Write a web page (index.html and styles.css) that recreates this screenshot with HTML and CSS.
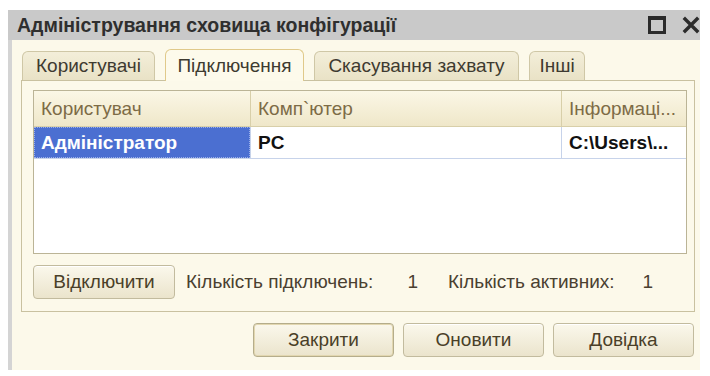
FILE: index.html
```html
<!DOCTYPE html>
<html lang="uk">
<head>
  <meta charset="UTF-8">
  <title>Адміністрування сховища конфігурації</title>
  <link rel="stylesheet" href="styles.css">
</head>
<body>
  <div class="window">
    <div class="titlebar">
      <span class="title">Адміністрування сховища конфігурації</span>
      <span class="win-btn max"></span>
      <span class="win-btn close">
        <svg width="18" height="18" viewBox="0 0 18 18"><path d="M3 3 L15 15 M15 3 L3 15" stroke="#2b2b2b" stroke-width="3.4" stroke-linecap="square"/></svg>
      </span>
    </div>

    <div class="content">
      <div class="tabs">
        <div class="tab t1">Користувачі</div>
        <div class="tab t2 active">Підключення</div>
        <div class="tab t3">Скасування захвату</div>
        <div class="tab t4">Інші</div>
      </div>

      <div class="panel">
        <div class="grid">
          <div class="row head">
            <div class="cell c1">Користувач</div>
            <div class="cell c2">Комп`ютер</div>
            <div class="cell c3">Інформаці...</div>
          </div>
          <div class="row data">
            <div class="cell c1 selected">Адміністратор</div>
            <div class="cell c2">PC</div>
            <div class="cell c3">C:\Users\...</div>
          </div>
        </div>

        <div class="status">
          <button class="btn disconnect">Відключити</button>
          <span class="label">Кількість підключень:</span>
          <span class="num n1">1</span>
          <span class="label">Кількість активних:</span>
          <span class="num n2">1</span>
        </div>
      </div>

      <div class="footer">
        <button class="btn wide default">Закрити</button>
        <button class="btn wide">Оновити</button>
        <button class="btn wide">Довідка</button>
      </div>
    </div>
  </div>
</body>
</html>
```

FILE: styles.css
```css
body {
  margin: 0;
  background: #ffffff;
  font-family: "Liberation Sans", Arial, sans-serif;
  font-size: 19px;
  color: #4a4030;
}
.window {
  margin: 10px 0 0 8px;
  width: 692px;
  height: 360px;
  display: flex;
  flex-direction: column;
  background: #fcf9ea;
  border-left: 4px solid #d4d4d4;
  box-sizing: border-box;
}
.titlebar {
  height: 30px;
  margin-left: -4px;
  padding-left: 9px;
  background: #c9c9c9;
  display: flex;
  align-items: center;
  flex-shrink: 0;
}
.title {
  flex: 1;
  font-weight: bold;
  font-size: 19.5px;
  color: #2f2f2f;
}
.win-btn.max {
  width: 12px;
  height: 11px;
  border: 3px solid #2b2b2b;
  border-top-width: 4px;
  margin-right: 16px;
}
.win-btn.close {
  width: 18px;
  height: 18px;
}
.content {
  flex: 1;
  padding: 8px 5px 0 9px;
  display: flex;
  flex-direction: column;
}
.tabs {
  display: flex;
  align-items: flex-end;
  padding-left: 1px;
  height: 32px;
}
.tab {
  height: 29px;
  margin-right: 10px;
  background: linear-gradient(#f3eed9, #e9e2c6);
  border: 1px solid #cfc7a6;
  border-bottom: none;
  border-radius: 6px 6px 0 0;
  color: #3e3a30;
  display: flex;
  align-items: center;
  justify-content: center;
  box-sizing: border-box;
}
.tab.active {
  height: 32px;
  background: #fdfaeb;
  border-color: #e0c98a;
  position: relative;
  top: 1px;
}
.t1 { width: 133px; }
.t2 { width: 139px; }
.t3 { width: 205px; }
.t4 { width: 56px; }
.panel {
  height: 232px;
  border: 1px solid #c9c1a0;
  background: #fcf9ea;
  padding: 9px 7px 0 11px;
  box-sizing: border-box;
}
.grid {
  height: 164px;
  border: 1px solid #bbb496;
  background: #ffffff;
  box-sizing: border-box;
}
.row {
  display: flex;
}
.row.head {
  height: 35px;
  background: linear-gradient(#fbf7e6, #efe7c9);
  border-bottom: 1px solid #d8cfa9;
  color: #7d6b46;
}
.row.data {
  height: 31px;
  border-bottom: 1px solid #c7d3ea;
  color: #111111;
  font-weight: bold;
}
.cell {
  display: flex;
  align-items: center;
  padding-left: 7px;
  box-sizing: border-box;
  white-space: nowrap;
  overflow: hidden;
}
.c1 { width: 216px; }
.c2 { width: 311px; }
.c3 { flex: 1; }
.head .c2, .head .c3 { border-left: 1px solid #d8cfa9; }
.data .c2 { border-left: 1px solid #c7d3ea; }
.data .c3 { border-left: 1px solid #c7d3ea; }
.cell.selected {
  background: #4b6fd1;
  color: #ffffff;
  outline: 1px dotted #9db0e8;
  outline-offset: -1px;
}
.status {
  display: flex;
  align-items: center;
  margin-top: 11px;
}
.btn {
  font-family: "Liberation Sans", Arial, sans-serif;
  font-size: 19px;
  color: #4a3f28;
  height: 34px;
  background: linear-gradient(#fbf8ec, #ebe4cc);
  border: 1px solid #c2bb9e;
  border-radius: 4px;
  box-shadow: inset 0 1px 0 #ffffff;
  cursor: pointer;
}
.disconnect {
  width: 142px;
  margin-right: 11px;
}
.label {
  color: #4a4030;
}
.num.n1 { margin: 0 30px 0 34px; }
.num.n2 { margin-left: 28px; }
.footer {
  display: flex;
  justify-content: flex-end;
  gap: 9px;
  margin-top: 11px;
  padding-right: 1px;
}
.btn.wide {
  width: 141px;
}
.btn.default {
  border-color: #b5ad8b;
  box-shadow: inset 0 0 0 1px #e2d7b0;
}
```
